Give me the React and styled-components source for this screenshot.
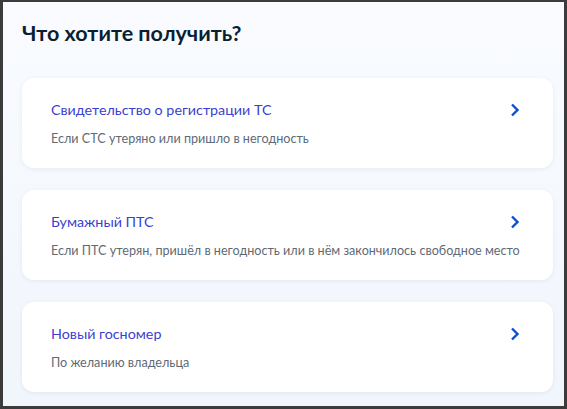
import React from 'react';
import styled, { createGlobalStyle } from 'styled-components';

const GlobalStyle = createGlobalStyle`
  html, body {
    margin: 0;
    padding: 0;
    background: #3b3b3b;
  }
  * { box-sizing: border-box; }
`;

const Frame = styled.div`
  width: 567px;
  height: 409px;
  border: 3px solid #3b3b3b;
  border-top-width: 2px;
  background: linear-gradient(180deg, #f9fbff 0%, #f1f5fc 100%);
  padding: 15px 11px 0 19px;
  font-family: Lato, 'Noto Sans', sans-serif;
  overflow: hidden;
`;

const Title = styled.h2`
  margin: 0 0 29px;
  font-size: 21.5px;
  line-height: 32px;
  font-weight: 700;
  color: #0b1f33;
`;

const List = styled.div`
  display: flex;
  flex-direction: column;
  gap: 22px;
`;

/* name and arrow share the first row, the hint runs under both */
const Card = styled.a`
  display: grid;
  grid-template-columns: 1fr auto;
  align-content: start;
  row-gap: 10px;
  height: 90px;
  padding: 22px 33px 0 29px;
  background: #ffffff;
  border-radius: 12px;
  box-shadow: 0 1px 4px rgba(28, 60, 130, 0.08);
  text-decoration: none;
  cursor: pointer;
`;

const Name = styled.span`
  font-size: 14.3px;
  line-height: 20px;
  color: #3a3fcf;
`;

const Hint = styled.span`
  grid-column: 1 / -1;
  font-size: 12.6px;
  line-height: 17px;
  color: #5f6a75;
  white-space: nowrap;
`;

const Chevron = styled.svg`
  width: 10px;
  height: 14px;
  margin-top: 3px;
`;

const items = [
  { name: 'Свидетельство о регистрации ТС', hint: 'Если СТС утеряно или пришло в негодность' },
  { name: 'Бумажный ПТС', hint: 'Если ПТС утерян, пришёл в негодность или в нём закончилось свободное место' },
  { name: 'Новый госномер', hint: 'По желанию владельца' },
];

const App = () => (
  <>
    <GlobalStyle />
    <Frame>
      <Title>Что хотите получить?</Title>
      <List>
        {items.map((item) => (
          <Card key={item.name}>
            <Name>{item.name}</Name>
            <Chevron viewBox="0 0 10 14">
              <path d="M2 1.5 L7.5 7 L2 12.5" fill="none" stroke="#0d4cd3" strokeWidth="2.4" />
            </Chevron>
            <Hint>{item.hint}</Hint>
          </Card>
        ))}
      </List>
    </Frame>
  </>
);

export default App;
